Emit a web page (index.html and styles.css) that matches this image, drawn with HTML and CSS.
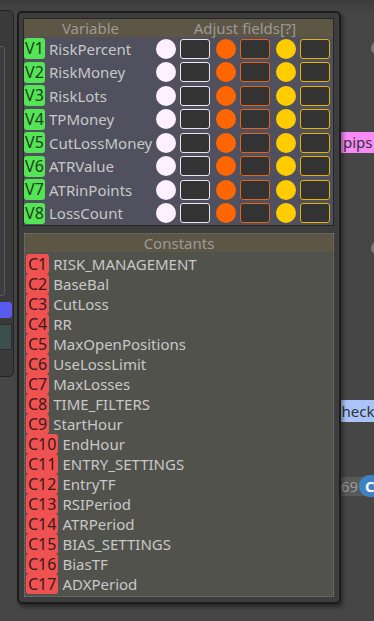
FILE: index.html
```html
<!DOCTYPE html>
<html lang="en">
<head>
  <meta charset="UTF-8">
  <meta name="viewport" content="width=device-width, initial-scale=1.0">
  <title>Variables</title>
  <link rel="stylesheet" href="styles.css">
</head>
<body>
  <div class="canvas">
    <!-- nodes behind the panel -->
    <div class="node node-left">
      <div class="node-box"></div>
      <div class="node-btn"></div>
      <div class="node-teal"></div>
    </div>
    <div class="port port-a"></div>
    <div class="port port-b"></div>
    <div class="tag tag-pips">pips</div>
    <div class="tag tag-check">Check</div>
    <div class="tag tag-num">69</div>
    <div class="blue-dot">C</div>

    <!-- variables panel -->
    <div class="panel">
      <section class="vars">
        <div class="head head-vars">
          <span>Variable</span>
          <span>Adjust fields[?]</span>
        </div>
        <div class="var-list" id="varList"></div>
      </section>
      <section class="consts">
        <div class="head">Constants</div>
        <div class="const-list" id="constList"></div>
      </section>
    </div>
  </div>
  <script>
    const variables = ['RiskPercent', 'RiskMoney', 'RiskLots', 'TPMoney', 'CutLossMoney', 'ATRValue', 'ATRinPoints', 'LossCount'];
    const constants = ['RISK_MANAGEMENT', 'BaseBal', 'CutLoss', 'RR', 'MaxOpenPositions', 'UseLossLimit', 'MaxLosses', 'TIME_FILTERS', 'StartHour', 'EndHour', 'ENTRY_SETTINGS', 'EntryTF', 'RSIPeriod', 'ATRPeriod', 'BIAS_SETTINGS', 'BiasTF', 'ADXPeriod'];

    document.getElementById('varList').innerHTML = variables.map((name, i) => `
      <div class="var-row">
        <span class="badge badge-v">V${i + 1}</span>
        <span class="name">${name}</span>
        <span class="dot dot-white"></span><span class="field field-white"></span>
        <span class="dot dot-orange"></span><span class="field field-orange"></span>
        <span class="dot dot-yellow"></span><span class="field field-yellow"></span>
      </div>`).join('');

    document.getElementById('constList').innerHTML = constants.map((name, i) => `
      <div class="const-row">
        <span class="badge badge-c">C${i + 1}</span>
        <span class="name">${name}</span>
      </div>`).join('');
  </script>
</body>
</html>
```
FILE: styles.css
```css
body {
  margin: 0;
  background: #464646;
  font-family: "Noto Sans", sans-serif;
  overflow: hidden;
}
.canvas {
  position: relative;
  width: 374px;
  height: 621px;
  overflow: hidden;
  background: linear-gradient(#3b3b3b, #464646 14px);
}
.node {
  position: absolute;
  background: #3a3a3a;
  border: 1px solid #232323;
  border-radius: 5px;
}
.node-left {
  left: -20px;
  top: 10px;
  width: 34px;
  height: 367px;
  padding-top: 35px;
  box-sizing: border-box;
}
.node-box {
  width: 24px;
  height: 250px;
  background: #3b3b42;
  border: 1px solid #5a5a5a;
  border-radius: 3px;
  box-sizing: border-box;
}
.node-btn {
  width: 31px;
  height: 16px;
  margin-top: 6px;
  background: #5a5aee;
  border-radius: 3px;
}
.node-teal {
  width: 31px;
  height: 26px;
  margin-top: 6px;
  background: #3d4f4d;
  border: 1px solid #2c2c2c;
  box-sizing: border-box;
}
.port {
  position: absolute;
  left: 371px;
  width: 16px;
  height: 14px;
  border-radius: 50%;
  background: #7a7a7a;
}
.port-a { top: 41px; }
.port-b { top: 241px; }
.tag {
  position: absolute;
  height: 21px;
  line-height: 21px;
  font-size: 15px;
  color: #333;
  padding: 0 6px 0 4px;
}
.tag-pips {
  left: 339px;
  top: 132px;
  background: #f88bf8;
}
.tag-check {
  left: 328px;
  top: 400px;
  height: 22px;
  line-height: 22px;
  background: #aac4fa;
}
.tag-num {
  left: 337px;
  top: 477px;
  height: 19px;
  line-height: 19px;
  background: #595959;
  color: #9a9a9a;
  padding-right: 12px;
  border-radius: 3px;
}
.blue-dot {
  position: absolute;
  left: 359px;
  top: 475px;
  width: 24px;
  height: 22px;
  border-radius: 11px;
  background: #3f82c2;
  color: #fff;
  font-weight: bold;
  font-size: 15px;
  line-height: 22px;
  padding-left: 6px;
  box-sizing: border-box;
}
.panel {
  position: absolute;
  left: 17px;
  top: 11px;
  width: 324px;
  height: 593px;
  box-sizing: border-box;
  background: #3d3d3d;
  border: 2px solid #1c1c1c;
  border-radius: 5px;
  box-shadow: 2px 3px 4px rgba(0, 0, 0, 0.45);
  padding: 5px 5px 0 4px;
  display: flex;
  flex-direction: column;
  gap: 7px;
}
.vars {
  background: #50505e;
  border: 1px solid #262626;
}
.head {
  height: 18px;
  line-height: 18px;
  background: #5e5644;
  color: #9a9a9a;
  font-size: 15px;
  text-align: center;
}
.head-vars {
  display: grid;
  grid-template-columns: 133px 1fr;
}
.var-row {
  height: 23.5px;
  display: flex;
  align-items: center;
}
.badge {
  height: 21px;
  line-height: 21px;
  font-size: 16px;
  padding: 0 1px;
  border-radius: 3px;
  box-sizing: border-box;
}
.badge-v {
  width: 21px;
  background: #55e455;
  color: #1b3f1b;
  text-align: center;
}
.name {
  color: #c8c8c8;
  font-size: 15px;
  margin-left: 4px;
  white-space: nowrap;
}
.var-row .name {
  flex: 1;
}
.dot {
  width: 20px;
  height: 20px;
  border-radius: 50%;
  flex-shrink: 0;
}
.field {
  width: 30px;
  height: 20px;
  margin: 0 6px 0 4px;
  background: #333;
  border: 1px solid;
  border-radius: 3px;
  box-sizing: border-box;
  flex-shrink: 0;
}
.dot-white { background: #fff0ff; }
.dot-orange { background: #ff6600; }
.dot-yellow { background: #ffcc00; }
.field-white { border-color: #ece4f0; }
.field-orange { border-color: #e2651a; }
.field-yellow { border-color: #e6b400; margin-right: 3px; }
.consts {
  flex: 1;
  margin: 0 0 5px 1px;
  background: #52524c;
  border: 1px dotted #7a7a74;
}
.const-list {
  padding: 2px 0 0 1px;
}
.const-row {
  height: 20px;
  display: flex;
  align-items: center;
}
.badge-c {
  height: 20px;
  line-height: 20px;
  padding: 0 2px;
  background: #f05252;
  color: #3a1a1a;
}
```
